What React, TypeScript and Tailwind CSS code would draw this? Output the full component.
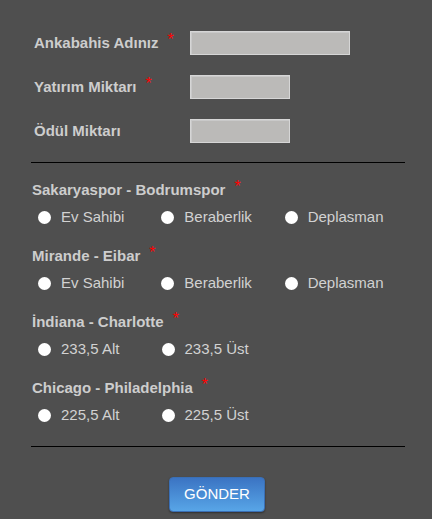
import React from "react";

const Star = () => <span className="ml-[9px] text-[16px] font-normal leading-none text-[#ff0000] relative -top-[3px]">*</span>;

const Radio = ({ label }: { label: string }) => (
  <div className="flex w-[123.5px] items-center">
    <div className="ml-[7px] h-[13px] w-[13px] rounded-full bg-white" />
    <span className="ml-[10px] text-[15px] leading-[18px] text-[#d2d2d2]">{label}</span>
  </div>
);

const Question = ({ title, options }: { title: string; options: string[] }) => (
  <div className="pb-[21px]">
    <div className="flex items-center pl-px text-[15px] font-bold leading-[18px] text-[#cdcdcd]">
      {title}
      <Star />
    </div>
    <div className="mt-[9px] flex">
      {options.map((o) => (
        <Radio key={o} label={o} />
      ))}
    </div>
  </div>
);

const Field = ({ label, req, w }: { label: string; req?: boolean; w: string }) => (
  <div className="flex h-[24px] items-center">
    <div className="flex w-[159px] items-center pl-[3px] text-[15px] font-bold text-[#cdcdcd]">
      {label}
      {req && <Star />}
    </div>
    <div className={`${w} h-[24px] border border-[#d6d6d6] bg-[#bbbab8] shadow-[inset_1px_1px_0_#c9c9c9]`} />
  </div>
);

export default function App() {
  return (
    <div
      className="h-[519px] w-[432px] bg-[#4f4f4f] px-[31px] pt-[31px]"
      style={{ fontFamily: '"Liberation Sans", Arial, sans-serif' }}
    >
      <div className="flex flex-col gap-[20px]">
        <Field label="Ankabahis Adınız" req w="w-[160px]" />
        <Field label="Yatırım Miktarı" req w="w-[100px]" />
        <Field label="Ödül Miktarı" w="w-[100px]" />
      </div>
      <div className="mt-[19px] h-px w-[374px] bg-black" />
      <div className="mt-[18px]">
        <Question title="Sakaryaspor - Bodrumspor" options={["Ev Sahibi", "Beraberlik", "Deplasman"]} />
        <Question title="Mirande - Eibar" options={["Ev Sahibi", "Beraberlik", "Deplasman"]} />
        <Question title="İndiana - Charlotte" options={["233,5 Alt", "233,5 Üst"]} />
        <Question title="Chicago - Philadelphia" options={["225,5 Alt", "225,5 Üst"]} />
      </div>
      <div className="mt-[1px] h-px w-[374px] bg-black" />
      <div className="mt-[30px] flex justify-center">
        <button className="ml-[2px] h-[35px] w-[96px] rounded-[4px] border border-[#3a6fb5] bg-gradient-to-b from-[#3b74c3] to-[#58a5e7] text-[15px] text-white shadow-[0_1px_2px_rgba(0,0,0,0.4)]">
          GÖNDER
        </button>
      </div>
    </div>
  );
}
